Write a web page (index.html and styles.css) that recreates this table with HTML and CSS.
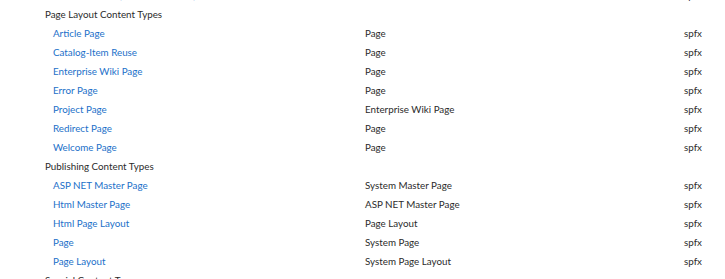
FILE: index.html
```html
<!DOCTYPE html>
<html lang="en">
<head>
<meta charset="utf-8">
<title>Site Content Types</title>
<link rel="stylesheet" href="styles.css">
</head>
<body>
<div class="list">
  <div class="row"><a class="name" href="#">Workflow Task (SharePoint 2013)</a><span class="parent">Task</span><span class="source">spfx</span></div>
  <div class="group">Page Layout Content Types</div>
  <div class="row"><a class="name" href="#">Article Page</a><span class="parent">Page</span><span class="source">spfx</span></div>
  <div class="row"><a class="name" href="#">Catalog-Item Reuse</a><span class="parent">Page</span><span class="source">spfx</span></div>
  <div class="row"><a class="name" href="#">Enterprise Wiki Page</a><span class="parent">Page</span><span class="source">spfx</span></div>
  <div class="row"><a class="name" href="#">Error Page</a><span class="parent">Page</span><span class="source">spfx</span></div>
  <div class="row"><a class="name" href="#">Project Page</a><span class="parent">Enterprise Wiki Page</span><span class="source">spfx</span></div>
  <div class="row"><a class="name" href="#">Redirect Page</a><span class="parent">Page</span><span class="source">spfx</span></div>
  <div class="row"><a class="name" href="#">Welcome Page</a><span class="parent">Page</span><span class="source">spfx</span></div>
  <div class="group">Publishing Content Types</div>
  <div class="row"><a class="name" href="#">ASP NET Master Page</a><span class="parent">System Master Page</span><span class="source">spfx</span></div>
  <div class="row"><a class="name" href="#">Html Master Page</a><span class="parent">ASP NET Master Page</span><span class="source">spfx</span></div>
  <div class="row"><a class="name" href="#">Html Page Layout</a><span class="parent">Page Layout</span><span class="source">spfx</span></div>
  <div class="row"><a class="name" href="#">Page</a><span class="parent">System Page</span><span class="source">spfx</span></div>
  <div class="row"><a class="name" href="#">Page Layout</a><span class="parent">System Page Layout</span><span class="source">spfx</span></div>
  <div class="group">Special Content Types</div>
</div>
</body>
</html>
```
FILE: styles.css
```css
html, body {
  margin: 0;
  padding: 0;
  background: #ffffff;
  overflow: hidden;
}
body {
  font-family: Lato, "Noto Sans", sans-serif;
  font-size: 9.8px;
  color: #2b2b2b;
}
.list {
  margin-top: -14px;
  padding-left: 45px;
  display: flex;
  flex-direction: column;
}
.group,
.row {
  height: 19px;
  line-height: 19px;
  white-space: nowrap;
}
.row {
  display: grid;
  grid-template-columns: 320px 319px auto;
}
.name {
  padding-left: 8px;
  color: #1b70c9;
  text-decoration: none;
}
.parent,
.source {
  color: #2b2b2b;
}
```
